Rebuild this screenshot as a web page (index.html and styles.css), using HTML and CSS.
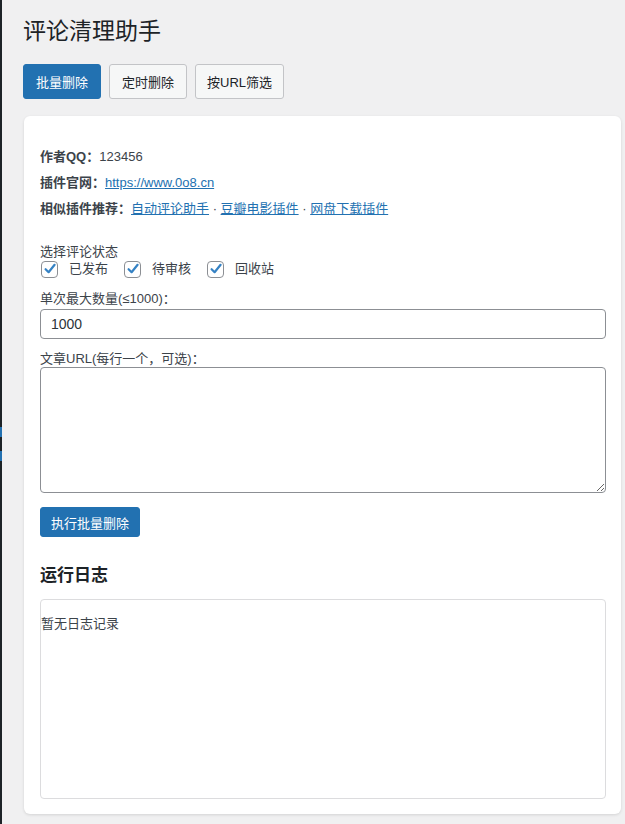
FILE: index.html
```html
<!DOCTYPE html>
<html lang="zh-CN">
<head>
<meta charset="utf-8">
<title>评论清理助手</title>
<link rel="stylesheet" href="styles.css">
</head>
<body>
<div class="adminbar-edge">
  <span class="edge-mark edge-mark-a"></span>
  <span class="edge-mark edge-mark-b"></span>
</div>
<div class="wrap">
  <h1 class="page-title">评论清理助手</h1>
  <div class="tabs">
    <button class="btn btn-primary btn-tab">批量删除</button>
    <button class="btn btn-secondary btn-tab">定时删除</button>
    <button class="btn btn-secondary btn-tab btn-tab-narrow">按URL筛选</button>
  </div>
  <div class="card">
    <div class="info">
      <p class="info-line"><strong>作者QQ：</strong>123456</p>
      <p class="info-line"><strong>插件官网：</strong><a href="#">https://www.0o8.cn</a></p>
      <p class="info-line"><strong>相似插件推荐：</strong><a href="#">自动评论助手</a> · <a href="#">豆瓣电影插件</a> · <a href="#">网盘下载插件</a></p>
    </div>
    <div class="field field-status">
      <div class="field-label">选择评论状态</div>
      <div class="checks">
        <label class="check"><span class="box"><svg viewBox="0 0 16 16" width="16" height="16"><path d="M3.6 8.2 L6.6 11.2 L12.6 3.8" fill="none" stroke="#3582c4" stroke-width="2.2" stroke-linecap="round" stroke-linejoin="round"/></svg></span><span class="check-text">已发布</span></label>
        <label class="check"><span class="box"><svg viewBox="0 0 16 16" width="16" height="16"><path d="M3.6 8.2 L6.6 11.2 L12.6 3.8" fill="none" stroke="#3582c4" stroke-width="2.2" stroke-linecap="round" stroke-linejoin="round"/></svg></span><span class="check-text">待审核</span></label>
        <label class="check"><span class="box"><svg viewBox="0 0 16 16" width="16" height="16"><path d="M3.6 8.2 L6.6 11.2 L12.6 3.8" fill="none" stroke="#3582c4" stroke-width="2.2" stroke-linecap="round" stroke-linejoin="round"/></svg></span><span class="check-text">回收站</span></label>
      </div>
    </div>
    <div class="field field-max">
      <div class="field-label">单次最大数量(≤1000)：</div>
      <input class="text-input" type="text" value="1000">
    </div>
    <div class="field field-url">
      <div class="field-label">文章URL(每行一个，可选)：</div>
      <textarea class="text-area"></textarea>
    </div>
    <button class="btn btn-primary btn-run">执行批量删除</button>
    <h2 class="log-title">运行日志</h2>
    <div class="log-box">
      <p class="log-empty">暂无日志记录</p>
    </div>
  </div>
</div>
</body>
</html>
```
FILE: styles.css
```css
html, body {
  margin: 0;
  padding: 0;
}
body {
  background: #f0f0f1;
  color: #3c434a;
  font-family: "Liberation Sans", "Noto Sans CJK SC", sans-serif;
  font-size: 13px;
  line-height: 1.4;
  position: relative;
  min-height: 824px;
}
.adminbar-edge {
  position: absolute;
  left: 0;
  top: 0;
  width: 2px;
  height: 824px;
  background: #1d2327;
}
.edge-mark {
  position: absolute;
  left: 0;
  width: 2px;
  background: #2271b1;
}
.edge-mark-a { top: 427px; height: 10px; }
.edge-mark-b { top: 451px; height: 10px; }

.wrap {
  padding: 0 4px 0 24px;
}
.page-title {
  margin: 0;
  padding: 16px 0 0 0;
  font-size: 23px;
  font-weight: 400;
  line-height: 30px;
  color: #1d2327;
  margin-left: -1px;
}
.tabs {
  display: flex;
  gap: 8px;
  margin-top: 18px;
  margin-left: -1px;
}
.btn {
  font-family: inherit;
  font-size: 13px;
  border-radius: 3px;
  border: 1px solid;
  cursor: pointer;
  margin: 0;
}
.btn-tab {
  height: 35px;
  padding: 0 12px;
}
.btn-tab-narrow {
  padding: 0 11px;
}
.btn-primary {
  background: #2271b1;
  border-color: #2271b1;
  color: #fff;
}
.btn-secondary {
  background: #f6f7f7;
  border-color: #c3c4c7;
  color: #1d2327;
}
.card {
  margin-top: 17px;
  background: #fff;
  border-radius: 6px;
  box-shadow: 0 1px 3px rgba(0, 0, 0, 0.12);
  padding: 28px 15px 16px 16px;
  height: 698px;
  box-sizing: border-box;
}
.info-line {
  margin: 0;
  line-height: 26px;
}
.info-line strong {
  color: #3c434a;
  font-weight: 700;
}
.info a {
  color: #2271b1;
  text-decoration: underline;
}
.field-label {
  line-height: 17px;
}
.field-status {
  margin-top: 21px;
}
.checks {
  display: flex;
  gap: 16px;
  height: 18px;
  align-items: center;
  margin-left: 1px;
}
.check {
  display: flex;
  align-items: center;
  gap: 11px;
}
.box {
  width: 17px;
  height: 17px;
  border: 1px solid #8c8f94;
  border-radius: 4px;
  box-sizing: border-box;
  display: flex;
  align-items: center;
  justify-content: center;
  background: #fff;
}
.box svg {
  display: block;
  flex: none;
}
.field-max {
  margin-top: 12px;
}
.text-input {
  display: block;
  width: 100%;
  box-sizing: border-box;
  height: 30px;
  margin-top: 2px;
  border: 1px solid #8c8f94;
  border-radius: 4px;
  padding: 0 10px;
  font-family: inherit;
  font-size: 14px;
  color: #2c3338;
  background: #fff;
}
.field-url {
  margin-top: 11px;
}
.text-area {
  display: block;
  width: 100%;
  box-sizing: border-box;
  height: 126px;
  margin-top: 0;
  border: 1px solid #8c8f94;
  border-radius: 4px;
  font-family: inherit;
  background: #fff;
}
.btn-run {
  display: block;
  margin-top: 14px;
  height: 30px;
  padding: 0 10px;
}
.log-title {
  margin: 28px 0 0 0;
  font-size: 17px;
  font-weight: 700;
  line-height: 22px;
  color: #1d2327;
}
.log-box {
  margin-top: 12px;
  height: 200px;
  box-sizing: border-box;
  border: 1px solid #dcdcde;
  border-radius: 4px;
}
.log-empty {
  margin: 15px 0 0 0;
  line-height: 18px;
}
```
